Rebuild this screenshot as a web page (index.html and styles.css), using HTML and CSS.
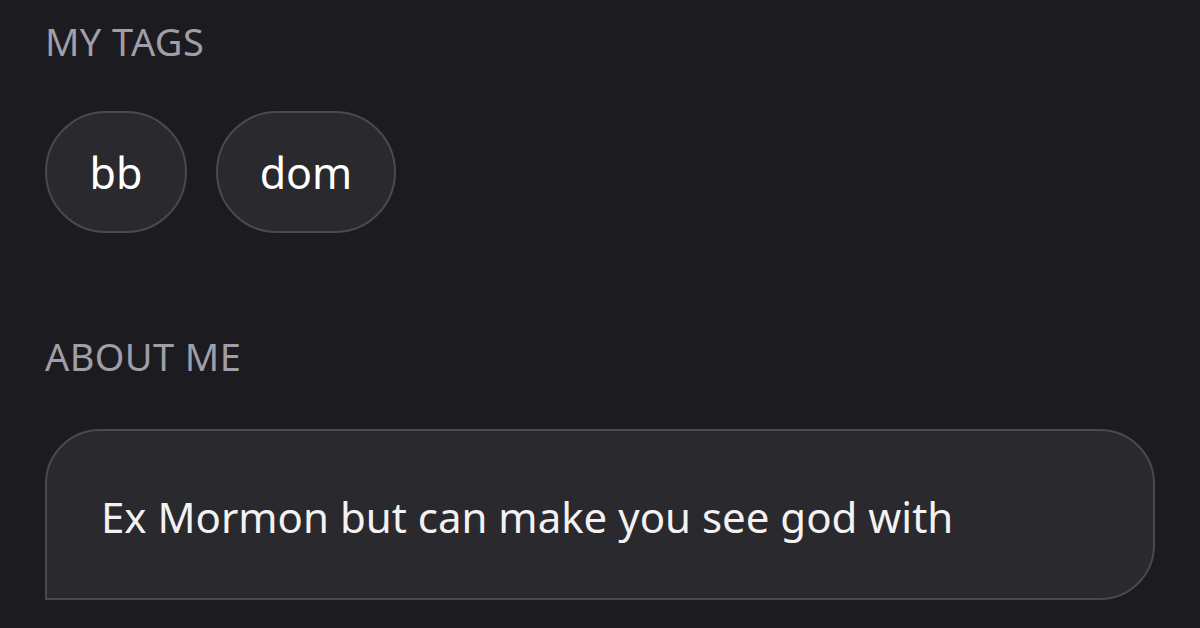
FILE: index.html
```html
<!DOCTYPE html>
<html lang="en">
<head>
<meta charset="utf-8">
<link rel="stylesheet" href="styles.css">
</head>
<body>
<main class="profile">
  <section class="section tags-section">
    <h2 class="label">MY TAGS</h2>
    <div class="tags">
      <span class="tag tag-bb">bb</span>
      <span class="tag tag-dom">dom</span>
    </div>
  </section>
  <section class="section about-section">
    <h2 class="label">ABOUT ME</h2>
    <div class="about-box">
      <p class="about-text">Ex Mormon but can make you see god with</p>
    </div>
  </section>
</main>
</body>
</html>
```

FILE: styles.css
```css
html, body {
  margin: 0;
  padding: 0;
  background: #1c1b1f;
  width: 1200px;
  height: 628px;
  overflow: hidden;
}
.profile {
  font-family: "Noto Sans", "Open Sans", sans-serif;
  padding: 18px 45px 0 45px;
  display: flex;
  flex-direction: column;
}
.section {
  display: flex;
  flex-direction: column;
}
.label {
  margin: 0;
  font-size: 38px;
  font-weight: 400;
  color: #a09ea8;
  line-height: 46px;
  letter-spacing: 0.4px;
}
.tags {
  display: flex;
  gap: 29px;
  margin-top: 47px;
}
.tag {
  box-sizing: border-box;
  height: 122px;
  border: 2px solid #4a494e;
  border-radius: 61px;
  background: #2a292d;
  color: #ffffff;
  font-size: 43px;
  display: flex;
  align-items: center;
  justify-content: center;
}
.tag-bb { width: 142px; }
.tag-dom { width: 180px; }
.about-section {
  margin-top: 100px;
}
.about-box {
  box-sizing: border-box;
  margin-top: 50px;
  width: 1110px;
  height: 171px;
  background: #2a292d;
  border: 2px solid #4a494e;
  border-radius: 55px 55px 55px 0;
  padding: 58px 0 0 54px;
}
.about-text {
  margin: 0;
  color: #f2f2f2;
  font-size: 42px;
  line-height: 56px;
}
```
